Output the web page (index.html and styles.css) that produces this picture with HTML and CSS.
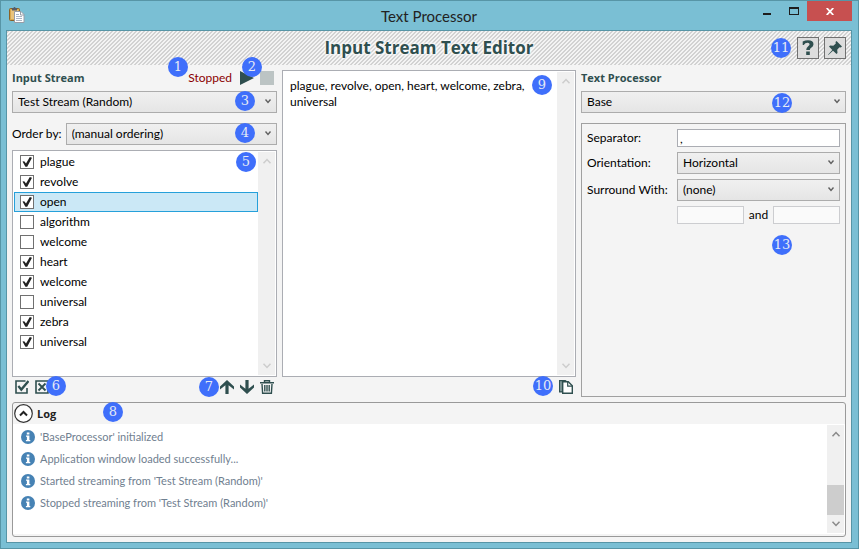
FILE: index.html
```html
<!DOCTYPE html>
<html lang="en">
<head>
<meta charset="utf-8">
<title>Text Processor</title>
<link rel="stylesheet" href="styles.css">
</head>
<body>
<svg class="defs" aria-hidden="true">
  <symbol id="chev" viewBox="0 0 8 8"><path d="M1.500 2.500L4 5.500l2.500-3" fill="none" stroke="currentColor" stroke-width="1.400"/></symbol>
  <symbol id="up" viewBox="0 0 10 6"><path d="M1.500 5.300L5 1.500l3.500 3.800" fill="none" stroke="currentColor" stroke-width="1.500"/></symbol>
  <symbol id="down" viewBox="0 0 10 6"><path d="M1.500.7L5 4.500 8.500.7" fill="none" stroke="currentColor" stroke-width="1.500"/></symbol>
  <symbol id="info" viewBox="0 0 14 14"><circle cx="7" cy="7" r="7" fill="#4682b4"/><path d="M5.800 2.500h2.600v2H5.800zM5 5.500h3.400v4.500H9.300V11.300H4.900V10H5.900V6.800H5z" fill="#fff"/></symbol>
</svg>
<div class="window">
  <header class="titlebar">
    <svg class="app-icon" viewBox="0 0 16 16" width="16" height="16" aria-hidden="true">
      <rect x=".5" y="1.500" width="10" height="12" rx="1" fill="#d9a84e" stroke="#8a6226"/>
      <rect x="2" y="3" width="7" height="9" fill="#e9c37c"/>
      <path d="M3 1h1.500a1 1 0 0 1 2 0H8v2.500H3z" fill="#555b66"/>
      <path d="M5.500 4.500h6.500l3 3v8H5.500z" fill="#fff" stroke="#989da6"/>
      <path d="M11.500 4.500V8H15" fill="none" stroke="#989da6"/>
      <path d="M7 7.500h3M7 9.500h6M7 11.500h6M7 13.500h6" stroke="#aab4c4"/>
    </svg>
    <h1 class="window-title">Text Processor</h1>
    <div class="caption">
      <button class="cap" aria-label="Minimize"><svg width="8" height="8" viewBox="0 0 8 8"><path d="M0 6h8v2H0z" fill="#1d1d1d"/></svg></button>
      <button class="cap" aria-label="Maximize"><svg width="10" height="8" viewBox="0 0 10 8"><path d="M0 0h10v8H0zM1 2v5h8V2z" fill="#1d1d1d" fill-rule="evenodd"/></svg></button>
      <button class="cap close" aria-label="Close"><svg width="8" height="7" viewBox="0 0 8 7"><path d="M.7 0l6.600 7M7.300 0L.7 7" stroke="#fff" stroke-width="1.800"/></svg></button>
    </div>
  </header>
  <main class="client">
    <div class="banner">
      <h2>Input Stream Text Editor</h2>
      <div class="banner-tools">
        <span class="badge b11">11</span>
        <button class="tool" aria-label="Help"><svg width="14" height="16" viewBox="0 0 14 16"><path d="M1.700 5V1.600Q4.300.2 7 .2q5.500 0 5.500 4 0 2-2.300 3.600Q8.800 8.700 8.800 10H5.200q0-2.300 2-3.700 1.400-.9 1.400-2Q8.600 2.700 6.600 2.700 4 2.700 2.800 5zM5.200 11.500h3.600V15H5.200z" fill="#2f4f4f"/></svg></button>
        <button class="tool" aria-label="Pin"><svg width="16" height="16" viewBox="0 0 16 16"><path d="M9.500 1L15 6.500l-1.200 1-1.300-.3-2.300 2.600.3 3.200-1 1.100L6 10.700 1.300 15 1 14.700 5.300 10 2 6.500l1.100-1 3.200.3 2.500-2.300-.3-1.400z" fill="#2f4f4f"/></svg></button>
      </div>
    </div>
    <div class="columns">
      <section class="col">
        <div class="col-head">
          <h3>Input Stream</h3>
          <span class="status">Stopped</span>
          <div class="transport">
            <button class="icon" aria-label="Start"><svg width="14" height="14" viewBox="0 0 14 14"><path d="M0 0l14 7-14 7z" fill="#2f4f4f"/></svg></button>
            <button class="icon" aria-label="Stop" disabled><svg width="14" height="14" viewBox="0 0 14 14"><path d="M0 0h14v14H0z" fill="#bcc4c4"/></svg></button>
          </div>
          <span class="badge b1">1</span><span class="badge b2">2</span>
        </div>
        <div class="combo"><select aria-label="Input stream"><option>Test Stream (Random)</option></select><svg class="chev"><use href="#chev"/></svg><span class="badge b3">3</span></div>
        <div class="order"><label for="order">Order by:</label>
          <div class="combo"><select id="order"><option>(manual ordering)</option></select><svg class="chev"><use href="#chev"/></svg><span class="badge b3">4</span></div>
        </div>
        <div class="box list">
          <ul>
            <li><label><input type="checkbox" checked>plague</label></li>
            <li><label><input type="checkbox" checked>revolve</label></li>
            <li class="selected"><label><input type="checkbox" checked>open</label></li>
            <li><label><input type="checkbox">algorithm</label></li>
            <li><label><input type="checkbox">welcome</label></li>
            <li><label><input type="checkbox" checked>heart</label></li>
            <li><label><input type="checkbox" checked>welcome</label></li>
            <li><label><input type="checkbox">universal</label></li>
            <li><label><input type="checkbox" checked>zebra</label></li>
            <li><label><input type="checkbox" checked>universal</label></li>
          </ul>
          <div class="scroll off"><svg><use href="#up"/></svg><svg><use href="#down"/></svg></div>
          <span class="badge b5">5</span>
        </div>
        <div class="actions">
          <button class="icon" aria-label="Check all"><svg width="14" height="14" viewBox="0 0 14 14"><path d="M10.500 1H1v12h11V8" fill="none" stroke="#2f4f4f" stroke-width="1.600"/><path d="M3.300 6l3 3.600L13.500 1" fill="none" stroke="#2f4f4f" stroke-width="2.300"/></svg></button>
          <button class="icon" aria-label="Uncheck all"><svg width="14" height="14" viewBox="0 0 14 14"><path d="M1 1h12v12H1z" fill="none" stroke="#2f4f4f" stroke-width="1.600"/><path d="M3.500 3.500l7 7M10.500 3.500l-7 7" stroke="#2f4f4f" stroke-width="1.800"/></svg></button>
          <span class="grow"></span>
          <button class="icon" aria-label="Move up"><svg width="14" height="14" viewBox="0 0 14 14"><path d="M7 0l7 6.500v3L8.600 5.200V14H5.400V5.200L0 9.500v-3z" fill="#2f4f4f"/></svg></button>
          <button class="icon" aria-label="Move down"><svg width="14" height="14" viewBox="0 0 14 14"><path d="M7 14l7-6.500v-3L8.600 8.800V0H5.400v8.800L0 4.500v3z" fill="#2f4f4f"/></svg></button>
          <button class="icon" aria-label="Delete"><svg width="14" height="14" viewBox="0 0 14 14"><path d="M0 2.700h14M4.500 2.500V.7h5v1.800M2 4l.6 9.300h8.800L12 4M4.800 5v6.500M7 5v6.500M9.200 5v6.500" fill="none" stroke="#2f4f4f" stroke-width="1.400"/></svg></button>
          <span class="badge b6">6</span><span class="badge b7">7</span>
        </div>
      </section>
      <section class="col">
        <div class="box output">
          <textarea aria-label="Output" readonly>plague, revolve, open, heart, welcome, zebra, universal</textarea>
          <div class="scroll off"><svg><use href="#up"/></svg><svg><use href="#down"/></svg></div>
          <span class="badge b9">9</span>
        </div>
        <div class="actions">
          <span class="grow"></span>
          <button class="icon" aria-label="Copy"><svg width="14" height="14" viewBox="0 0 14 14"><path d="M0 0h6.500l2 1.500H3.500v11H0z" fill="#2f4f4f"/><path d="M1.200 1.200h1.600v10H1.200z" fill="#8ea3a3"/><path d="M3.700 1.700h5.600l4 4v7.600H3.700z" fill="#fff" stroke="#2f4f4f" stroke-width="1.400"/><path d="M8.700 1.700v4.500h4.600" fill="none" stroke="#2f4f4f" stroke-width="1.200"/></svg></button>
          <span class="badge b10">10</span>
        </div>
      </section>
      <section class="col">
        <div class="col-head"><h3>Text Processor</h3></div>
        <div class="combo"><select aria-label="Text processor"><option>Base</option></select><svg class="chev"><use href="#chev"/></svg><span class="badge b12">12</span></div>
        <form class="settings">
          <label for="sep">Separator:</label><input id="sep" type="text" value=",">
          <label for="ori">Orientation:</label><div class="combo"><select id="ori"><option>Horizontal</option></select><svg class="chev"><use href="#chev"/></svg></div>
          <label for="sur">Surround With:</label><div class="combo"><select id="sur"><option>(none)</option></select><svg class="chev"><use href="#chev"/></svg></div>
          <div class="pair"><input type="text" disabled aria-label="Before"><span>and</span><input type="text" disabled aria-label="After"></div>
          <span class="badge b13">13</span>
        </form>
      </section>
    </div>
    <section class="log">
      <div class="log-head">
        <button class="expander" aria-label="Collapse log"><svg width="19" height="19" viewBox="0 0 19 19"><circle cx="9.500" cy="9.500" r="8.800" fill="#fff" stroke="#333" stroke-width="1.200"/><path d="M6 11.500L9.500 8l3.500 3.500" fill="none" stroke="#222" stroke-width="2"/></svg></button>
        <h3>Log</h3><span class="badge b8">8</span>
      </div>
      <div class="log-body">
        <ul>
          <li><svg><use href="#info"/></svg>'BaseProcessor' initialized</li>
          <li><svg><use href="#info"/></svg>Application window loaded successfully...</li>
          <li><svg><use href="#info"/></svg>Started streaming from 'Test Stream (Random)'</li>
          <li><svg><use href="#info"/></svg>Stopped streaming from 'Test Stream (Random)'</li>
        </ul>
        <div class="scroll"><svg><use href="#up"/></svg><i class="thumb"></i><svg><use href="#down"/></svg></div>
      </div>
    </section>
  </main>
</div>
</body>
</html>
```
FILE: styles.css
```css
* { box-sizing: border-box; }
body { margin: 0; font: 12px/16px Lato, "Open Sans", sans-serif; color: #000; }
h1, h2, h3, ul { margin: 0; padding: 0; list-style: none; }
button, select, input, textarea { font: inherit; color: inherit; margin: 0; padding: 0; border: 0; background: none; border-radius: 0; }
button { display: flex; align-items: center; justify-content: center; }
.defs { display: none; }

.window { min-height: 100vh; display: flex; flex-direction: column; background: #7abfd4; border: 1px solid #5795a6; padding: 0 6px 5px 5px; }
.titlebar { position: relative; display: flex; align-items: center; justify-content: center; height: 29px; flex: none; }
.app-icon { position: absolute; left: 3px; top: 6px; }
.window-title { font-size: 15px; font-weight: 400; line-height: 20px; color: #222; }
.caption { position: absolute; top: 0; right: 0; display: flex; }
.cap { width: 27px; height: 20px; }
.cap.close { width: 45px; background: #c75050; }

.client { flex: 1; display: flex; flex-direction: column; background: #f4f4f4; border: 1px solid #5795a6; }
.banner { display: flex; align-items: center; justify-content: center; position: relative; height: 34px; background: linear-gradient(135deg, #d2d2d2 25%, #f4f4f4 25% 50%, #d2d2d2 50% 75%, #f4f4f4 75%) 0 0 / 4px 4px; }
.banner h2 { font: 700 17px/24px "Open Sans", sans-serif; color: #2f4f4f; text-shadow: 0 0 3px #fff, 0 0 3px #fff, 0 0 5px #fff; }
.banner-tools { position: absolute; right: 5px; display: flex; gap: 5px; }
.tool { width: 22px; height: 22px; background: #ddd; border: 1px solid #707070; }

.columns { flex: 1; display: grid; grid-template-columns: 265fr 294fr 265fr; gap: 5px; padding: 5px; }
.col { display: flex; flex-direction: column; min-width: 0; }
.col-head { position: relative; display: flex; align-items: center; gap: 8px; height: 16px; margin-bottom: 5px; }
.transport { display: flex; gap: 6px; margin-right: 3px; }
h3 { font: 700 11px/16px "Open Sans", sans-serif; color: #2f4f4f; }
.status { margin-left: auto; color: #8b0000; }
.combo { position: relative; display: flex; flex: 1; }
.col > .combo { flex: none; }
.combo select { appearance: none; flex: 1; min-width: 0; height: 22px; padding: 0 5px; border: 1px solid #acacac; background: linear-gradient(#f0f0f0, #e5e5e5); }
.chev { position: absolute; right: 5px; top: 6px; width: 8px; height: 8px; color: #606060; pointer-events: none; }
.order { display: flex; align-items: center; gap: 4px; margin: 10px 0 5px; }
.box { position: relative; flex: 1; display: flex; background: #fff; border: 1px solid #abadb3; padding: 1px; }
.list ul { flex: 1; }
.list li { height: 20px; border: 1px solid transparent; }
.list li.selected { background: #cbe8f6; border-color: #26a0da; }
.list label { display: flex; align-items: center; gap: 6px; height: 18px; padding-left: 5px; }
input[type=checkbox] { appearance: none; position: relative; width: 14px; height: 14px; background: #fff; border: 1px solid #707070; }
input[type=checkbox]:checked::after { content: ""; position: absolute; inset: 1px; background: #212121; clip-path: polygon(5% 46%, 22% 42%, 40% 66%, 78% 0, 100% 8%, 52% 98%, 34% 98%); }
.scroll { width: 17px; flex: none; display: flex; flex-direction: column; align-items: center; justify-content: space-between; padding: 6px 0; background: #f0f0f0; color: #8a8a8a; }
.scroll svg { width: 10px; height: 6px; }
.scroll.off { color: #cdcdcd; }
.thumb { width: 17px; height: 30px; margin: auto 0 6px; background: #cdcdcd; }
.actions { position: relative; display: flex; align-items: center; gap: 6px; height: 20px; padding: 0 3px; }
.grow { flex: 1; }
.output textarea { flex: 1; min-width: 0; resize: none; outline: 0; padding: 6px; }

.settings { position: relative; flex: 1; margin-top: 10px; border: 1px solid #a0a0a0; padding: 5px; display: grid; grid-template-columns: 85px 1fr; row-gap: 5px; column-gap: 5px; align-content: start; align-items: center; white-space: nowrap; }
input[type=text] { width: 100%; min-width: 0; height: 18px; padding: 0 2px; background: #fff; border: 1px solid #abadb3; }
input[type=text]:disabled { background: #fafafa; border-color: #cccdd0; }
.pair { grid-column: 2; display: grid; grid-template-columns: 1fr auto 1fr; gap: 5px; align-items: center; }

.log { margin: 0 5px 5px; border: 1px solid #999; border-radius: 3px; padding-bottom: 2px; }
.log-head { position: relative; display: flex; align-items: center; gap: 4px; height: 21px; padding-left: 1px; }
.log-head h3 { color: #222; }
.log-body { display: flex; height: 110px; background: #fff; padding: 1px; }
.log-body ul { flex: 1; padding: 1px 0 0 7px; font-size: 11px; color: #708090; }
.log-body li { display: flex; align-items: center; gap: 5px; height: 22px; }
.log-body li svg { width: 14px; height: 14px; }

.badge { position: absolute; width: 20px; height: 20px; border-radius: 50%; background: #3f6ffb; color: #e6eaf5; font: 13px/20px "DejaVu Serif", serif; text-align: center; pointer-events: none; }
.b1 { right: 89px; top: -13px; }
.b2 { right: 15px; top: -13px; }
.b3 { right: 22px; top: 0; }
.b5 { right: 20px; top: 1px; }
.b6 { left: 34px; top: -1px; }
.b7 { right: 58px; top: 0; }
.b8 { left: 90px; top: -1px; }
.b9 { right: 23px; top: 4px; }
.b10 { right: 23px; top: -1px; }
.b11 { right: 55px; top: 1px; }
.b12 { right: 54px; top: 2px; }
.b13 { right: 53px; top: 111px; }
```
